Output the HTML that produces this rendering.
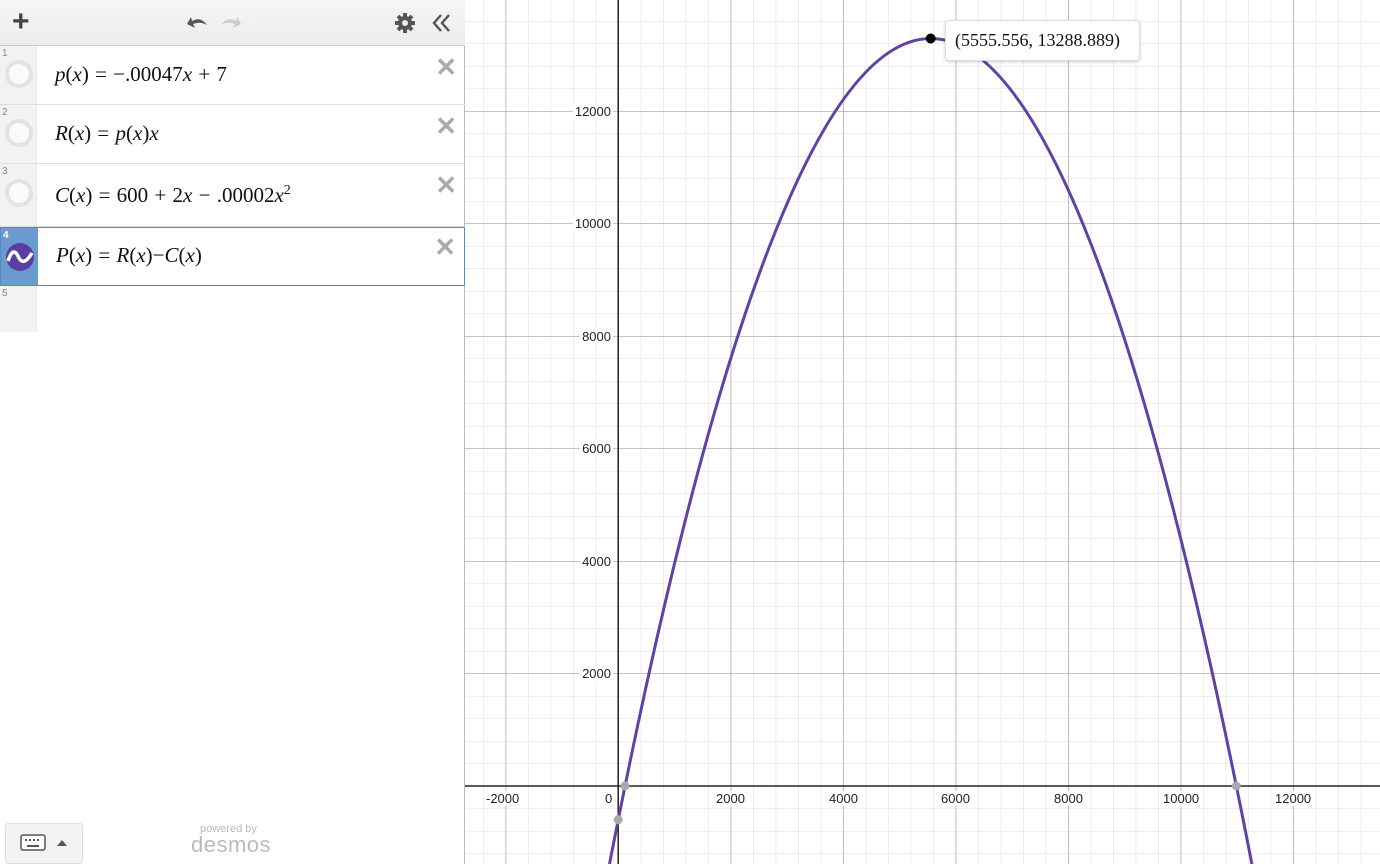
<!DOCTYPE html>
<html><head><meta charset="utf-8"><style>
*{margin:0;padding:0;box-sizing:border-box}
body{width:1380px;height:864px;overflow:hidden;background:#fff;font-family:"Liberation Sans",sans-serif;position:relative}
#left{position:absolute;left:0;top:0;width:465px;height:864px;background:#fff;border-right:1px solid #bbb}
#hdr{position:absolute;left:0;top:0;width:465px;height:46px;background:linear-gradient(#f6f6f6,#ececec);border-bottom:1px solid #ccc}
.row{position:absolute;left:0;width:465px;border-bottom:1px solid #ddd}
.gut{position:absolute;left:0;top:0;bottom:0;width:37px;background:#f2f2f2;border-right:1px solid #e6e6e6}
.num{position:absolute;left:2px;top:2px;font-size:10px;color:#888}
.circ{position:absolute;left:5px;width:28px;height:28px;border-radius:50%;border:4px solid #e2e2e2;background:#fafafa}
.expr{position:absolute;left:55px;font-family:"Liberation Serif",serif;font-size:21px;color:#111;white-space:nowrap;word-spacing:1px}
.expr i{font-style:italic}
.x{position:absolute;right:8px;top:6px;font-size:26px;color:#aaa;font-weight:bold}
.yw{position:absolute;left:553px;width:60px;text-align:right}
.yl{display:inline-block;font-size:13px;color:#222;background:#fff;padding:0 2px}
.xl{position:absolute;font-size:13px;color:#222;top:791px;background:#fff;padding:0 2px}
</style></head><body>
<svg style="position:absolute;left:0;top:0" width="1380" height="864">
<defs>
<pattern id="mn" patternUnits="userSpaceOnUse" x="618.2" y="786" width="22.5" height="22.5"><path d="M0 0V22.5M0 0H22.5" stroke="#dedede" stroke-width="1" fill="none"/></pattern>
<pattern id="mj" patternUnits="userSpaceOnUse" x="618.2" y="786" width="112.5" height="112.5"><path d="M0 0V112.5M0 0H112.5" stroke="#8a8a8a" stroke-width="1" fill="none"/></pattern>
</defs>
<rect x="465" y="0" width="915" height="864" fill="url(#mn)"/>
<rect x="465" y="0" width="915" height="864" fill="url(#mj)"/>
<line x1="618.2" y1="0" x2="618.2" y2="864" stroke="#222" stroke-width="1.5"/>
<line x1="465" y1="786" x2="1380" y2="786" stroke="#222" stroke-width="1.5"/>
<path d="M609.5 864 Q930.7 -787 1251.9 864" stroke="#6042a6" stroke-width="3" fill="none"/>
<circle cx="625" cy="786" r="4.5" fill="#aaa"/>
<circle cx="618.2" cy="819.8" r="4.5" fill="#aaa"/>
<circle cx="1236.3" cy="786" r="4.5" fill="#aaa"/>
<circle cx="930.7" cy="38.5" r="5" fill="#000"/>
</svg>
<div style="position:absolute;left:945px;top:20px;width:195px;height:41px;background:#fff;border:1px solid #ddd;border-radius:4px;box-shadow:0 1px 3px rgba(0,0,0,.2);font-family:'Liberation Serif',serif;font-size:18px;line-height:39px;padding-left:9px;color:#111">(5555.556, 13288.889)</div>
<div class="yw" style="top:103px"><span class="yl">12000</span></div>
<div class="yw" style="top:215px"><span class="yl">10000</span></div>
<div class="yw" style="top:328px"><span class="yl">8000</span></div>
<div class="yw" style="top:440px"><span class="yl">6000</span></div>
<div class="yw" style="top:553px"><span class="yl">4000</span></div>
<div class="yw" style="top:665px"><span class="yl">2000</span></div>
<div class="xl" style="left:484px">-2000</div>
<div class="xl" style="left:603px">0</div>
<div class="xl" style="left:714px">2000</div>
<div class="xl" style="left:827px">4000</div>
<div class="xl" style="left:939px">6000</div>
<div class="xl" style="left:1052px">8000</div>
<div class="xl" style="left:1161px">10000</div>
<div class="xl" style="left:1273px">12000</div>
<div id="left">
<div id="hdr">
<div style="position:absolute;left:12px;top:4px;font-size:30px;color:#444;font-weight:bold;line-height:36px">+</div>
<svg style="position:absolute;left:183px;top:12px" width="62" height="20"><path d="M4 12 L8 5 L9 9 Q18 4 24 13 Q17 9 10 12 L12 16Z" fill="#555"/><path d="M58 12 L54 5 L53 9 Q44 4 38 13 Q45 9 52 12 L50 16Z" fill="#ccc"/></svg>
<svg style="position:absolute;left:394px;top:12px" width="22" height="22" viewBox="0 0 22 22"><g fill="#555"><circle cx="11" cy="11" r="7"/><g stroke="#555" stroke-width="4"><line x1="11" y1="1" x2="11" y2="21"/><line x1="1" y1="11" x2="21" y2="11"/><line x1="4" y1="4" x2="18" y2="18"/><line x1="18" y1="4" x2="4" y2="18"/></g></g><circle cx="11" cy="11" r="3" fill="#eee"/></svg>
<svg style="position:absolute;left:431px;top:13px" width="20" height="20"><path d="M10 2 L3 10 L10 18 M18 2 L11 10 L18 18" stroke="#555" stroke-width="2.4" fill="none"/></svg>
</div>
<div class="row" style="top:46px;height:59px"><div class="gut"><div class="num">1</div><div class="circ" style="top:14px"></div></div><div class="expr" style="top:16px"><i>p</i>(<i>x</i>) = −.00047<i>x</i> + 7</div><div class="x">✕</div></div>
<div class="row" style="top:105px;height:59px"><div class="gut"><div class="num">2</div><div class="circ" style="top:14px"></div></div><div class="expr" style="top:16px"><i>R</i>(<i>x</i>) = <i>p</i>(<i>x</i>)<i>x</i></div><div class="x">✕</div></div>
<div class="row" style="top:164px;height:63px"><div class="gut"><div class="num">3</div><div class="circ" style="top:15px"></div></div><div class="expr" style="top:19px"><i>C</i>(<i>x</i>) = 600 + 2<i>x</i> − .00002<i>x</i><sup style="font-size:14px">2</sup></div><div class="x">✕</div></div>
<div class="row" style="top:227px;height:59px;border:1px solid #5a8ac6"><div class="gut" style="background:#6a9bd0;border:none"><div class="num" style="color:#fff;font-weight:bold">4</div>
<svg style="position:absolute;left:4px;top:14px" width="30" height="30"><circle cx="15" cy="15" r="14" fill="#5a3ea1"/><path d="M3 19 Q8 4 13 14 Q18 26 27 11" stroke="#fff" stroke-width="3.5" fill="none"/></svg></div>
<div class="expr" style="top:15px"><i>P</i>(<i>x</i>) = <i>R</i>(<i>x</i>)−<i>C</i>(<i>x</i>)</div><div class="x" style="top:4px">✕</div></div>
<div class="row" style="top:286px;height:46px;border:none"><div class="gut"><div class="num">5</div></div></div>
<div style="position:absolute;left:5px;top:823px;width:78px;height:41px;background:#f3f3f3;border:1px solid #ddd;border-radius:3px">
<svg style="position:absolute;left:14px;top:10px" width="50" height="18"><rect x="1" y="1" width="24" height="15" rx="2" fill="#fff" stroke="#555" stroke-width="1.5"/><g fill="#555"><rect x="5" y="5" width="2" height="2"/><rect x="9" y="5" width="2" height="2"/><rect x="13" y="5" width="2" height="2"/><rect x="17" y="5" width="2" height="2"/><rect x="7" y="11" width="12" height="2"/></g><path d="M37 12 L42 6 L47 12Z" fill="#555"/></svg></div>
<div style="position:absolute;left:200px;top:823px;font-size:11px;color:#bbb">powered by</div>
<div style="position:absolute;left:191px;top:832px;font-size:22px;color:#bbb;letter-spacing:.5px">desmos</div>
</div>
</body></html>
